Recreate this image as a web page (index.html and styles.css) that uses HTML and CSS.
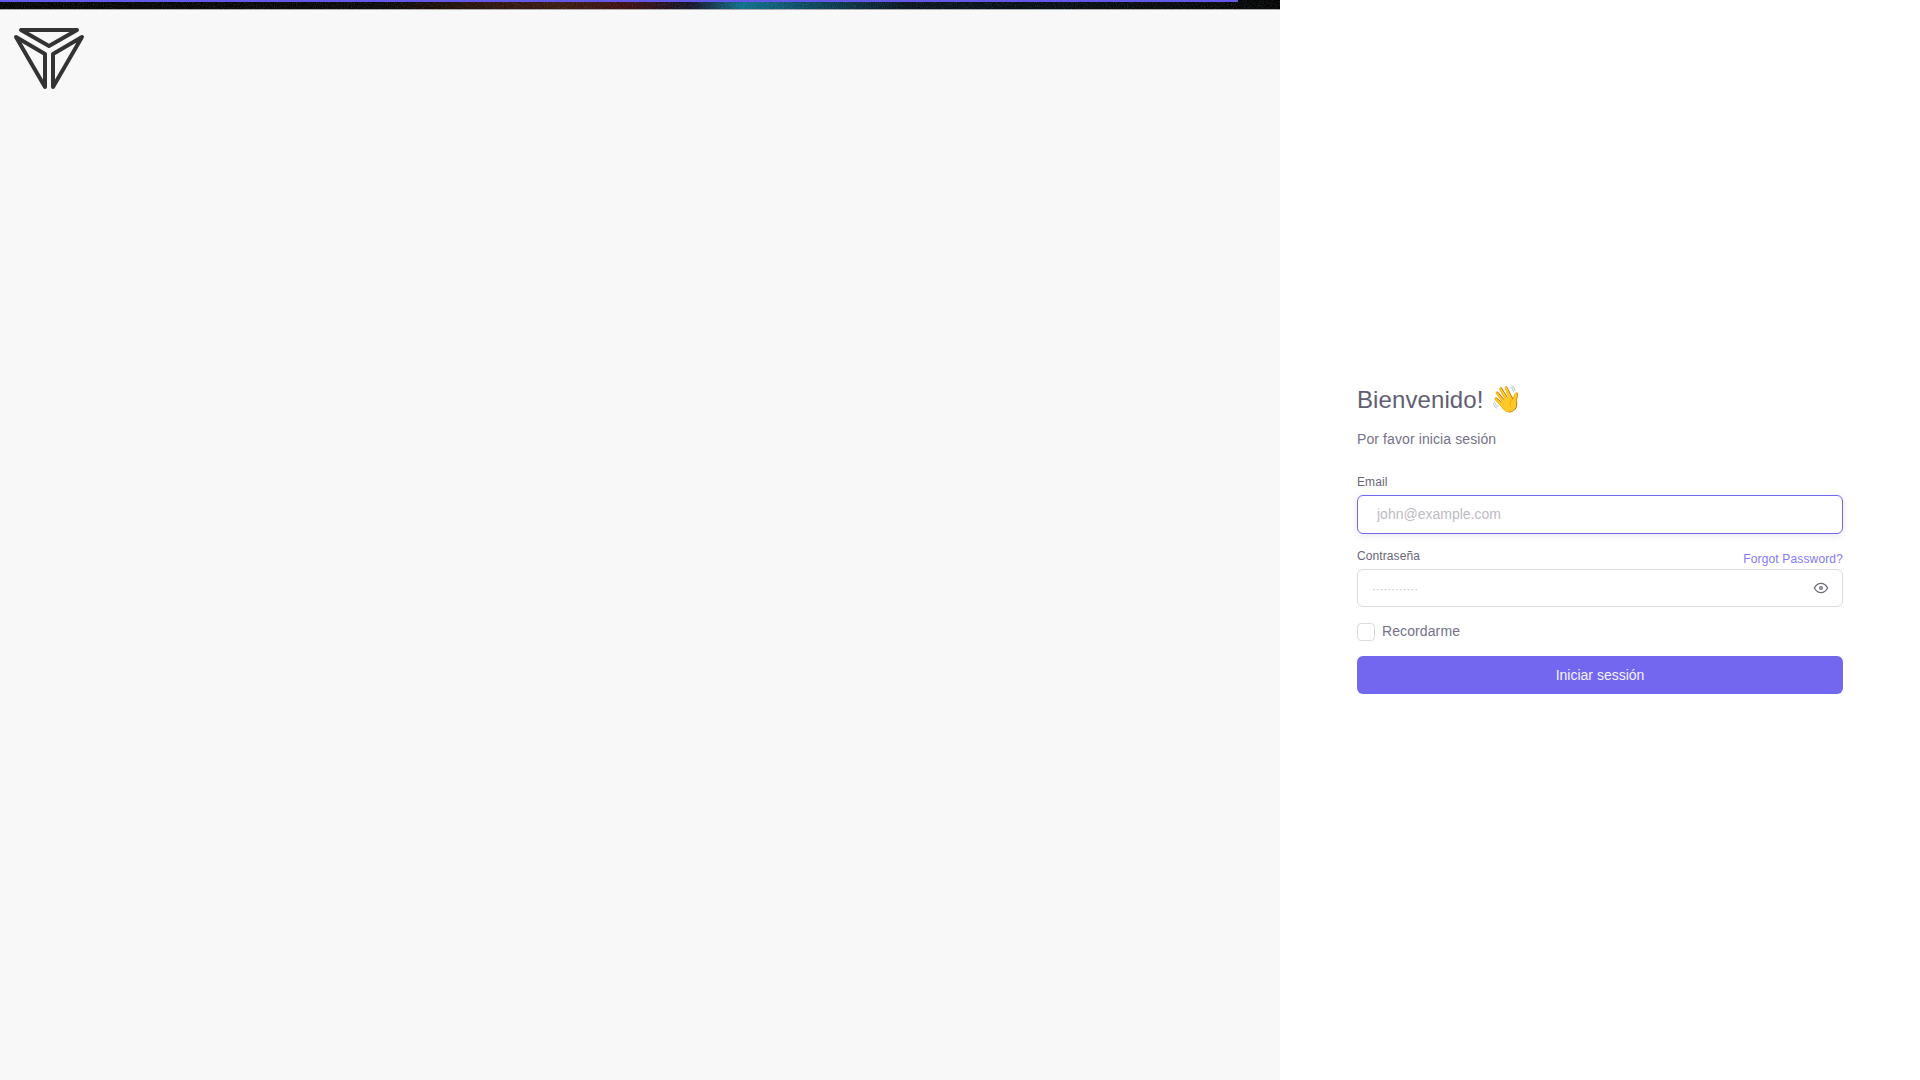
FILE: index.html
```html
<!DOCTYPE html>
<html lang="es">
<head>
    <title>Iniciar sesión</title>
    <link rel="stylesheet" href="styles.css">
</head>
<body>
    <div class="auth-page">
        <div class="cover">
            <div class="top-strip">
                <svg class="noise" width="1280" height="9">
                    <filter id="grain"><feTurbulence type="fractalNoise" baseFrequency="0.9" numOctaves="2" seed="4"/><feColorMatrix values="0 0 0 0 1  0 0 0 0 1  0 0 0 0 1  0 0 0 1.4 -0.6"/></filter>
                    <rect width="1280" height="9" filter="url(#grain)"/>
                </svg>
                <div class="progress"></div>
            </div>
            <svg class="logo" width="100" height="80" viewBox="0 10 100 80" fill="none" stroke="#333333" stroke-width="4" stroke-linejoin="round" stroke-linecap="round">
                <path d="M21 30H77L49 46Z"/>
                <path d="M16 37L45 54V87Z"/>
                <path d="M82 37L53 54V87Z"/>
            </svg>
        </div>
        <div class="side">
            <h4 class="title">Bienvenido! <span class="wave">👋</span></h4>
            <p class="subtitle">Por favor inicia sesión</p>
            <form class="login-form">
                <label class="field-label" for="email">Email</label>
                <input class="field field-email focused" id="email" type="text" placeholder="john@example.com">

                <div class="label-row">
                    <label class="field-label" for="password">Contraseña</label>
                    <a class="forgot" href="#">Forgot Password?</a>
                </div>
                <div class="password-wrap">
                    <input class="field field-password" id="password" type="text" placeholder="············">
                    <svg class="eye" width="16" height="16" viewBox="0 0 24 24" fill="none" stroke="#6f6b7d" stroke-width="2" stroke-linecap="round" stroke-linejoin="round">
                        <circle cx="12" cy="12" r="2"/>
                        <path d="M22 12c-2.7 4.7-6 7-10 7s-7.3-2.300-10-7c2.700-4.700 6-7 10-7s7.300 2.300 10 7"/>
                    </svg>
                </div>

                <label class="remember">
                    <span class="check"></span>
                    <span class="remember-text">Recordarme</span>
                </label>
                <button class="submit" type="button">Iniciar sessión</button>
            </form>
        </div>
    </div>
</body>
</html>
```
FILE: styles.css
```css
* { box-sizing: border-box; }
html, body { height: 100%; }
body { margin: 0; font-family: "Liberation Sans", Arial, sans-serif; color: #75718a; background: #fff; letter-spacing: .1px; }
.auth-page { display: flex; height: 100vh; overflow: hidden; }

.cover { width: 1280px; background: #f8f8f8; }
.top-strip { position: relative; height: 10px; overflow: hidden; border-bottom: 1px solid #aaa; background: linear-gradient(90deg, #050505 0%, #0a0808 30%, #2c140c 38%, #3a1a10 44%, #3e0f14 49%, #14142a 54%, #0f6f8a 58%, #0c4258 64%, #08141e 71%, #050505 100%); }
.noise { position: absolute; top: 0; left: 0; opacity: .2; }
.progress { position: absolute; top: 0; left: 0; width: 1238px; height: 2px; background: #6458e8; }
.logo { display: block; }

.side { width: 640px; padding: 0 77px; display: flex; flex-direction: column; justify-content: center; }
.title { margin: 0; font-size: 24px; font-weight: 400; line-height: 28px; color: #625e72; }
.wave { font-size: 26px; line-height: 24px; letter-spacing: 0; }
.subtitle { margin: 14px 0 24px; font-size: 14px; line-height: 22px; }

.login-form { display: flex; flex-direction: column; }
.field-label { font-size: 12px; line-height: 16px; color: #696578; margin-bottom: 5px; }
.label-row { display: flex; justify-content: space-between; align-items: flex-end; margin-top: 14px; }
.forgot { font-size: 12px; line-height: 14px; color: #8579f5; text-decoration: none; margin-bottom: 3px; letter-spacing: .15px; }

.field { display: block; width: 100%; height: 38px; border: 1px solid #dbdade; border-radius: 6px; background: #fff; font-family: inherit; font-size: 14px; letter-spacing: 0; outline: none; }
.field::placeholder { color: #bdbbc4; opacity: 1; }
.field-email { height: 39px; padding: 0 19px 1px; }
.field.focused { border-color: #7367f0; box-shadow: 0 2px 6px rgba(47, 43, 61, .1); }
.field-password { padding: 1px 14px 0; font-size: 11.5px; }
.password-wrap { position: relative; }
.eye { position: absolute; top: 11px; right: 14px; }

.remember { display: flex; align-items: center; gap: 7px; margin-top: 16px; font-size: 14px; line-height: 18px; }
.remember-text { margin-top: -2px; }
.check { width: 18px; height: 18px; border: 1px solid #dbdade; border-radius: 4px; background: #fff; }
.submit { height: 38px; margin-top: 15px; border: 0; border-radius: 6px; background: #7367f0; color: #f4f3fe; font-family: inherit; font-size: 14px; letter-spacing: 0; }
```
